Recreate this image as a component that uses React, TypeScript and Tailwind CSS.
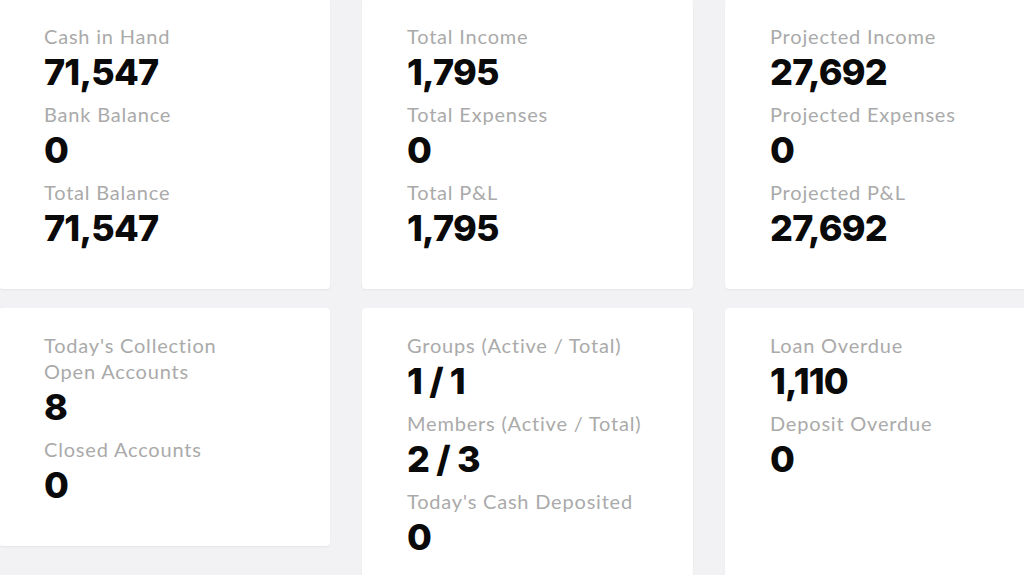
import React from "react";

type Pair = { label: string; value?: string };

const Card = ({ items, className = "" }: { items: Pair[]; className?: string }) => (
  <div className={"bg-white rounded-[4px] shadow-[0_1px_2px_rgba(0,0,0,0.06)] pl-[45px] pr-4 pt-[24px] pb-[32px] " + className}>
    {items.map((it, i) => (
      <div key={i}>
        <div className="text-[20px] leading-[26px] text-[#aaaaaa] font-['Lato',sans-serif] tracking-[0.8px] whitespace-nowrap">{it.label}</div>
        {it.value !== undefined && (
          <div className="text-[36px] leading-[46px] mb-[6px] font-extrabold text-[#0a0a0a] font-['Inter',sans-serif] tracking-[-0.8px]">
            {it.value}
          </div>
        )}
      </div>
    ))}
  </div>
);

export default function App() {
  return (
    <div className="w-[1024px] h-[575px] overflow-hidden bg-[#f2f2f5]">
      <div className="grid grid-cols-[331px_331px_331px] gap-x-[32px] gap-y-[19px] w-[1100px] -mt-px -ml-px">
        <Card
          items={[
            { label: "Cash in Hand", value: "71,547" },
            { label: "Bank Balance", value: "0" },
            { label: "Total Balance", value: "71,547" },
          ]}
        />
        <Card
          items={[
            { label: "Total Income", value: "1,795" },
            { label: "Total Expenses", value: "0" },
            { label: "Total P&L", value: "1,795" },
          ]}
        />
        <Card
          items={[
            { label: "Projected Income", value: "27,692" },
            { label: "Projected Expenses", value: "0" },
            { label: "Projected P&L", value: "27,692" },
          ]}
        />
        <Card
          className="self-start"
          items={[
            { label: "Today's Collection" },
            { label: "Open Accounts", value: "8" },
            { label: "Closed Accounts", value: "0" },
          ]}
        />
        <Card
          items={[
            { label: "Groups (Active / Total)", value: "1 / 1" },
            { label: "Members (Active / Total)", value: "2 / 3" },
            { label: "Today's Cash Deposited", value: "0" },
          ]}
        />
        <Card
          items={[
            { label: "Loan Overdue", value: "1,110" },
            { label: "Deposit Overdue", value: "0" },
          ]}
        />
      </div>
    </div>
  );
}
